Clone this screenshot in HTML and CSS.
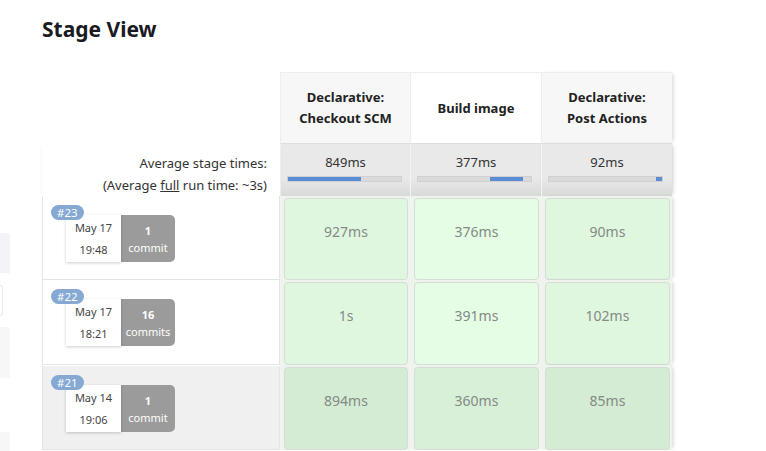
FILE: index.html
```html
<!DOCTYPE html>
<html>
<head>
<meta charset="utf-8">
<link rel="stylesheet" href="styles.css">
</head>
<body>
<div class="page">
  <div class="sidebar">
    <div class="sb sb1"></div>
    <div class="sb sb2"></div>
    <div class="sb sb3"></div>
    <div class="sb sb4"></div>
  </div>
  <div class="main">
    <h2 class="title">Stage View</h2>
    <div class="grid">
      <div class="corner"></div>
      <div class="shead odd"><span>Declarative:<br>Checkout SCM</span></div>
      <div class="shead even"><span>Build image</span></div>
      <div class="shead odd last"><span>Declarative:<br>Post Actions</span></div>

      <div class="avg-label">Average stage times:<br>(Average <u>full</u> run time: ~3s)</div>
      <div class="avg"><div class="avg-time">849ms</div><div class="bar"><div class="fill" style="margin-left:0;width:73px"></div></div></div>
      <div class="avg"><div class="avg-time">377ms</div><div class="bar"><div class="fill" style="margin-left:72px;width:33px"></div></div></div>
      <div class="avg last"><div class="avg-time">92ms</div><div class="bar"><div class="fill" style="margin-left:107px;width:6px"></div></div></div>

      <div class="run">
        <div class="build">
          <span class="badge">#23</span>
          <div class="when"><div>May 17</div><div>19:48</div></div>
          <div class="commits"><b>1</b><span>commit</span></div>
        </div>
      </div>
      <div class="cellwrap"><div class="cell c1">927ms</div></div>
      <div class="cellwrap"><div class="cell c2">376ms</div></div>
      <div class="cellwrap last"><div class="cell c3">90ms</div></div>

      <div class="run">
        <div class="build">
          <span class="badge">#22</span>
          <div class="when"><div>May 17</div><div>18:21</div></div>
          <div class="commits"><b>16</b><span>commits</span></div>
        </div>
      </div>
      <div class="cellwrap"><div class="cell c1">1s</div></div>
      <div class="cellwrap"><div class="cell c2">391ms</div></div>
      <div class="cellwrap last"><div class="cell c3">102ms</div></div>

      <div class="run hover">
        <div class="build">
          <span class="badge">#21</span>
          <div class="when"><div>May 14</div><div>19:06</div></div>
          <div class="commits"><b>1</b><span>commit</span></div>
        </div>
      </div>
      <div class="cellwrap"><div class="cell c1 dark">894ms</div></div>
      <div class="cellwrap"><div class="cell c2 dark">360ms</div></div>
      <div class="cellwrap last"><div class="cell c3 dark">85ms</div></div>
    </div>
  </div>
</div>
</body>
</html>
```

FILE: styles.css
```css
html, body {
  margin: 0;
  padding: 0;
  background: #fff;
  font-family: "Noto Sans", "Open Sans", sans-serif;
  color: #333;
  overflow: hidden;
  height: 451px;
}
.page {
  display: flex;
  height: 451px;
}
.sidebar {
  width: 10px;
  flex: none;
  display: flex;
  flex-direction: column;
}
.sb { width: 10px; }
.sb1 { margin-top: 233px; height: 42px; background: #f3f3f8; }
.sb2 { margin-top: 12px; height: 30px; width: 2px; border: 1px solid #ececf2; border-left: none; border-radius: 0 3px 3px 0; }
.sb3 { margin-top: 11px; height: 54px; background: #f7f7f7; }
.sb4 { margin-top: 54px; height: 20px; background: #f7f7f7; }

.main {
  padding-left: 32px;
}
.title {
  margin: 15px 0 0;
  font-size: 21px;
  line-height: 28px;
  font-weight: 700;
  color: #1a1a22;
  letter-spacing: 0;
}
.grid {
  margin-top: 29px;
  display: grid;
  grid-template-columns: 238px 130px 131px 131px;
  grid-template-rows: 71px 53px 84px 85px 85px;
}
.shead {
  display: flex;
  align-items: center;
  justify-content: center;
  text-align: center;
  font-size: 13px;
  font-weight: 700;
  line-height: 21px;
  color: #222;
  border-top: 1px solid #eee;
  border-left: 1px solid #eee;
}
.shead.odd { background: #f7f7f7; }
.shead.even { background: #fff; }
.last { box-shadow: 3px 0 4px -2px rgba(0,0,0,0.18); }

.avg-label {
  text-align: right;
  font-size: 13px;
  line-height: 22px;
  color: #333;
  padding: 9px 13px 0 0;
  box-shadow: 0 2px 3px -1px rgba(0,0,0,0.15);
  position: relative;
}
.avg-label u { text-decoration: underline; }
.avg {
  background: linear-gradient(#e9e9e9 0, #e9e9e9 65%, #d9d9d9 100%);
  border-left: 1px solid #f4f4f4;
  border-top: 1px solid #dedede;
  display: flex;
  flex-direction: column;
  align-items: center;
  padding-top: 9px;
  box-sizing: border-box;
}
.avg.last { box-shadow: 3px 0 4px -2px rgba(0,0,0,0.18), 0 2px 3px -1px rgba(0,0,0,0.12); }
.avg-time {
  font-size: 13px;
  line-height: 18px;
  color: #333;
}
.bar {
  margin-top: 5px;
  margin-right: 3px;
  width: 113px;
  height: 4px;
  background: #dadada;
  border: 1px solid #d0d0d0;
  box-sizing: content-box;
  display: flex;
}
.fill {
  height: 4px;
  background: #5b8dd6;
}

.run {
  border: 1px solid #e4e4e4;
  border-top: none;
  background: #fff;
  position: relative;
}
.run.hover { background: #f0f0f0; margin-top: 1px; }
.build {
  position: relative;
  display: flex;
  margin: 19px 0 0 23px;
}
.badge {
  position: absolute;
  left: -15px;
  top: -10px;
  background: #85a9d3;
  color: #fff;
  font-size: 11.5px;
  line-height: 15px;
  padding: 0 6px;
  border-radius: 8px;
  z-index: 2;
}
.when {
  width: 55px;
  height: 47px;
  background: #fff;
  box-shadow: 0 1px 3px rgba(0,0,0,0.2);
  display: flex;
  flex-direction: column;
  align-items: center;
  justify-content: center;
  gap: 8px;
  font-size: 11px;
  line-height: 14px;
  color: #444;
  position: relative;
  z-index: 1;
}
.commits {
  width: 54px;
  height: 47px;
  background: #9b9b9b;
  border-radius: 0 5px 5px 0;
  display: flex;
  flex-direction: column;
  align-items: center;
  justify-content: center;
  color: #fff;
  font-size: 11px;
  line-height: 17px;
}
.commits b { font-weight: 700; }

.cellwrap {
  padding: 2px 2px 0 3px;
  background: #eef3ee;
  border-left: 1px solid #f3f3f3;
}
.cell {
  height: 100%;
  box-sizing: border-box;
  border: 1px solid #d6dcd6;
  border-radius: 4px;
  display: flex;
  justify-content: center;
  padding-top: 23px;
  font-size: 14px;
  line-height: 19px;
  color: #858a85;
}
.c1 { background: #dff7df; }
.c2 { background: #e4fde4; }
.c3 { background: #dff7df; }
.cell.dark { background: #d3ecd3; }
.cell.c2.dark { background: #d8f0d8; }
```
